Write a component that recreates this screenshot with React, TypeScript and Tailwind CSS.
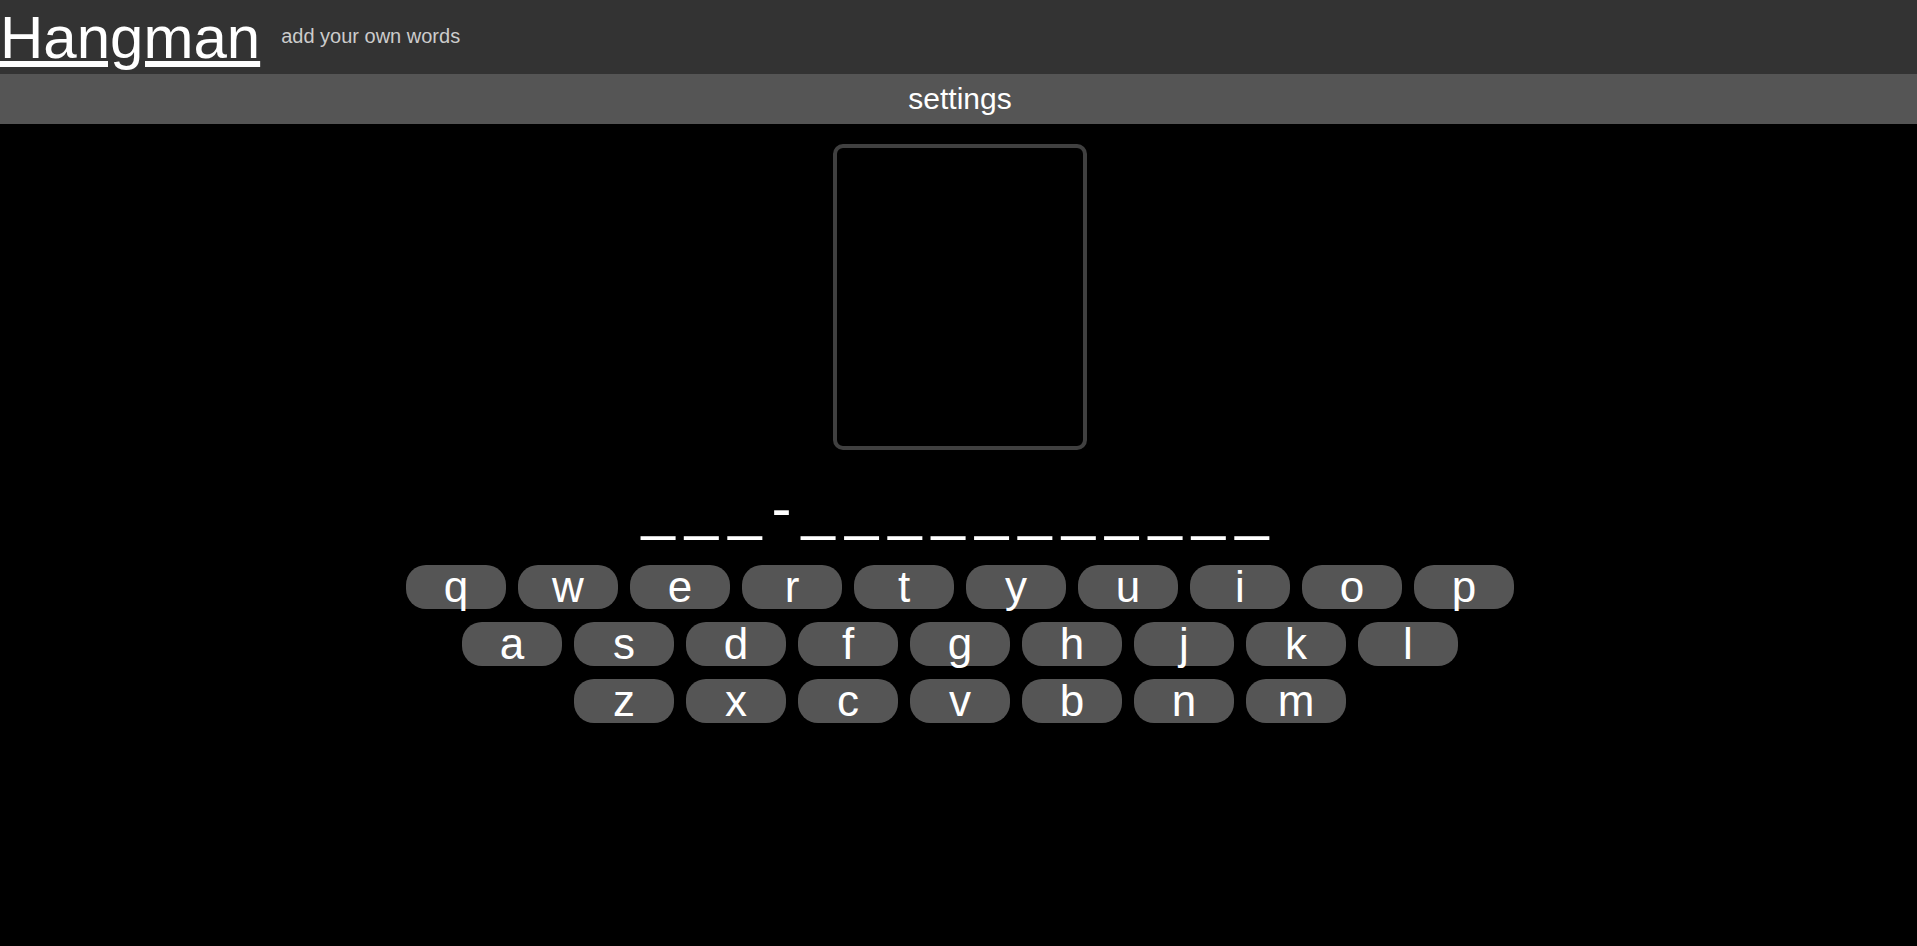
import React from "react";

const rows = ["qwertyuiop", "asdfghjkl", "zxcvbnm"];
const word = "___-___________";

export default function App() {
  return (
    <div className="h-screen w-full overflow-hidden bg-black">
      <div
        className="min-h-screen w-[1920px] bg-black text-white"
        style={{ fontFamily: '"Liberation Sans", Arial, sans-serif' }}
      >
        <header className="flex h-[74px] items-center bg-[#333333]">
          <a href="#" className="text-[60px] leading-[69px] text-white underline">
            Hangman
          </a>
          <span className="mb-[2px] ml-[21px] text-[20px] leading-[23px] text-[#cccccc]">
            add your own words
          </span>
        </header>
        <div className="flex h-[50px] items-center justify-center bg-[#555555] pb-[2px] text-[30px] text-white">
          settings
        </div>
        <main className="flex flex-col items-center">
          <div className="mt-[20px] h-[306px] w-[254px] rounded-[10px] border-4 border-[#404040]" />
          <div className="mt-[23px] whitespace-pre text-[60px] leading-[69px] tracking-[10px] text-white">
            {word}
          </div>
          <div className="mt-[23px] flex flex-col items-center gap-[13px]">
            {rows.map((row) => (
              <div key={row} className="flex gap-[12px]">
                {row.split("").map((ch) => (
                  <button
                    key={ch}
                    className="flex h-[44px] w-[100px] items-center justify-center rounded-[20px] bg-[#555555] text-[44px] leading-none text-white"
                  >
                    {ch}
                  </button>
                ))}
              </div>
            ))}
          </div>
        </main>
      </div>
    </div>
  );
}
